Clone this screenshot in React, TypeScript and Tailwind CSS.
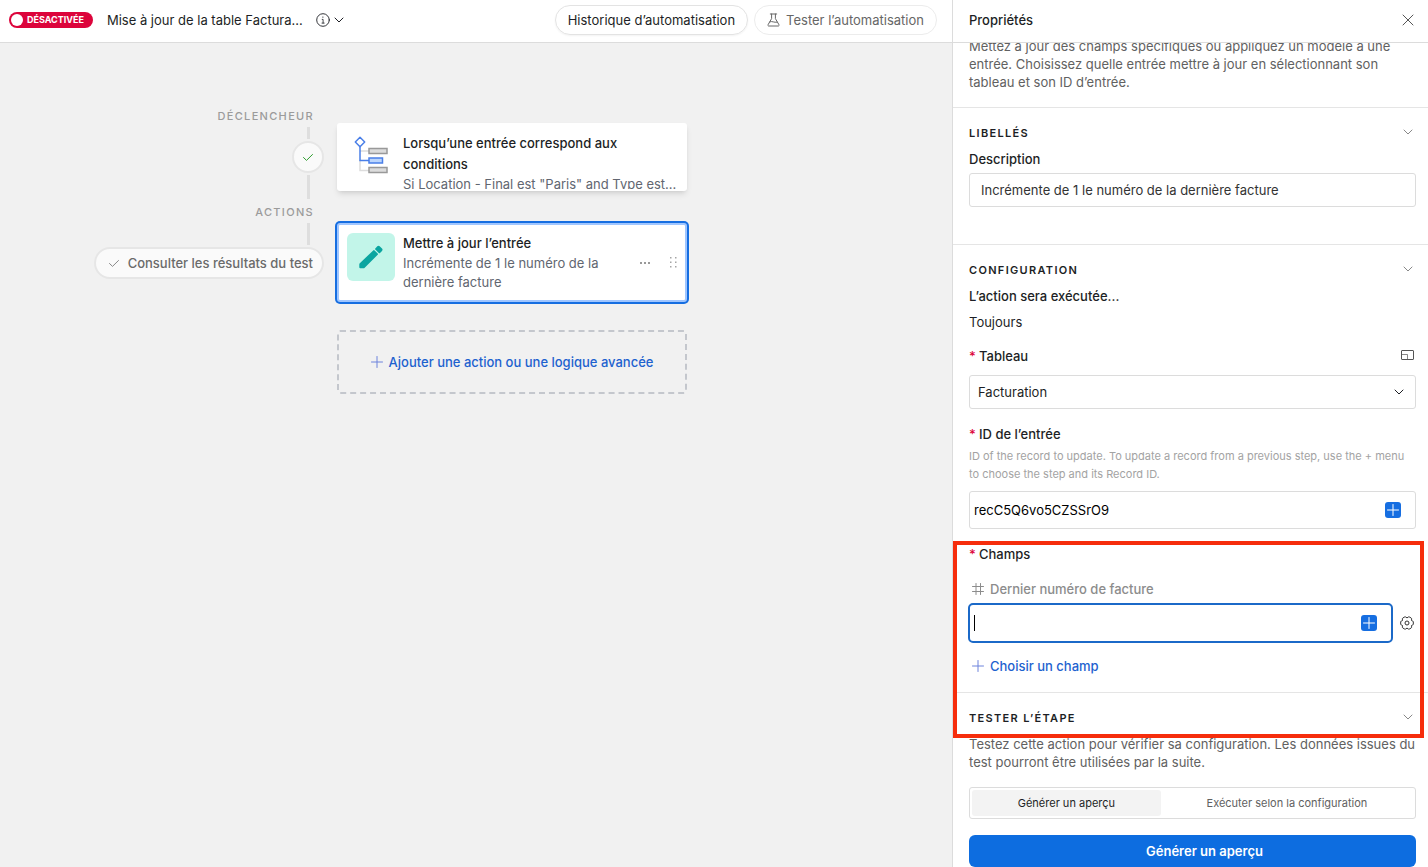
import React from "react";

type IconProps = { className?: string };

const Chevron = ({ className }: IconProps) => (
  <svg className={className} width="10" height="6" viewBox="0 0 10 6" fill="none" stroke="currentColor" strokeLinecap="round" strokeLinejoin="round">
    <path d="M1 1l4 4 4-4" />
  </svg>
);

const Check = ({ className }: IconProps) => (
  <svg className={className} width="12" height="9" viewBox="0 0 12 9" fill="none" stroke="currentColor" strokeLinecap="round" strokeLinejoin="round">
    <path d="M1.500 4.500L4.500 7.400 10.500 1.500" />
  </svg>
);

const Plus = ({ className }: IconProps) => (
  <svg className={className} width="12" height="12" viewBox="0 0 12 12" fill="none" stroke="currentColor" strokeLinecap="round">
    <path d="M6 .5v11M.5 6h11" />
  </svg>
);

const Info = () => (
  <svg width="14" height="14" viewBox="0 0 14 14" fill="none" stroke="currentColor" strokeLinecap="round">
    <circle cx="7" cy="7" r="6.3" strokeWidth=".9" />
    <path d="M6.200 6.400h.9v3.600M6 10.100h2.200" strokeWidth=".8" />
    <circle cx="6.900" cy="4.100" r=".6" fill="currentColor" stroke="none" />
  </svg>
);

const Flask = () => (
  <svg width="13" height="14" viewBox="0 0 13 14" fill="none" stroke="currentColor" strokeLinecap="round" strokeLinejoin="round">
    <path d="M3.300 1h6.400M4.600 1v4.600L1 11.800c-.3.600.1 1.200.7 1.200h9.600c.6 0 1-.6.7-1.200L8.400 5.600V1M3 8.800c2.200-1 4 1 7 .4" />
  </svg>
);

const Close = () => (
  <svg width="12" height="12" viewBox="0 0 12 12" fill="none" stroke="currentColor" strokeLinecap="round">
    <path d="M1 1l10 10M11 1L1 11" />
  </svg>
);

const ConditionIcon = () => (
  <svg width="34" height="38" viewBox="0 0 34 38" fill="none" strokeLinejoin="miter">
    <path d="M6 15h9M6 24v10.500h9" stroke="#dddddd" strokeWidth="1.500" />
    <path d="M6 11v13.500h9" stroke="#4a7fe8" strokeWidth="1.500" />
    <path d="M6 1.300L10.700 6 6 10.700 1.300 6z" fill="#fff" stroke="#4a7fe8" strokeWidth="1.500" strokeLinejoin="round" />
    <rect x="15" y="12.500" width="18" height="5" fill="#dcdcdc" stroke="#999" strokeWidth="1.500" />
    <rect x="15" y="22" width="13.500" height="5" fill="#bcd6fd" stroke="#4a7fe8" strokeWidth="1.500" />
    <rect x="15" y="31.500" width="18" height="5" fill="#dcdcdc" stroke="#999" strokeWidth="1.500" />
  </svg>
);

const Pencil = () => (
  <svg width="24" height="24" viewBox="0 0 24 24" fill="#0ba5a0">
    <path d="M.8 18.300L14.200 5.400q.7-.6 1.400 0l3.100 3.100q.6.700 0 1.300L5.700 22.700q-.5.500-1.200.5H1.300q-1 0-1-1v-2.800q0-.6.500-1.100z" />
    <path d="M16.300 3.400L18.300 1.300q1.200-1.100 2.400 0l2.300 2.300q1.100 1.200 0 2.400l-2 2q-.6.500-1.200 0l-3.500-3.400q-.6-.6 0-1.200z" />
  </svg>
);

const Expand = () => (
  <svg width="13" height="10" viewBox="0 0 13 10" fill="none" stroke="currentColor">
    <rect x=".5" y=".5" width="12" height="9" rx=".5" />
    <path d="M1 4.500h5.500v5" strokeOpacity=".7" />
  </svg>
);

const Hash = () => (
  <svg width="12" height="12" viewBox="0 0 12 12" fill="none" stroke="currentColor" strokeLinecap="round">
    <path d="M4 .5v11M8.500 .5v11M.5 3.500h11M.5 8.500h11" />
  </svg>
);

const Gear = () => (
  <svg width="14" height="14" viewBox="0 0 14 14" fill="none" stroke="currentColor" strokeLinejoin="round">
    <path d="M13.300 5.600v2.800Q13.200 8.900 12.500 9L11.500 9.500 11.600 10.900Q11.700 11.600 11.200 12L9.200 13.100Q8.600 13.300 8.200 12.900L7 12.100 5.800 12.900Q5.400 13.300 4.800 13.100L2.800 12Q2.300 11.600 2.400 10.900L2.500 9.500 1.500 9Q.8 8.900.7 8.400V5.600Q.8 5.100 1.500 5L2.500 4.500 2.400 3.100Q2.300 2.400 2.800 2L4.800.9Q5.400.700 5.800 1.100L7 1.900 8.200 1.100Q8.600.700 9.200.9L11.200 2Q11.700 2.400 11.600 3.100L11.500 4.500 12.500 5Q13.200 5.100 13.300 5.600z" />
    <circle cx="7" cy="7" r="2" />
  </svg>
);

const Drag = () => (
  <svg width="7" height="11" viewBox="0 0 7 11" fill="#a5a5a5">
    <path d="M0 0h1.500v1.500H0zM5 0h1.500v1.500H5zM0 4.500h1.500V6H0zM5 4.500h1.500V6H5zM0 9h1.500v1.500H0zM5 9h1.500v1.500H5z" />
  </svg>
);

const SectionTitle = ({ children }: { children: React.ReactNode }) => (
  <div className="flex items-center justify-between pt-4 pr-[3px]">
    <h2 className="text-[11px] leading-[18px] font-semibold tracking-[0.12em] uppercase">{children}</h2>
    <button type="button" aria-label="Replier" className="pb-[2px] text-[#888]">
      <Chevron />
    </button>
  </div>
);

const Required = () => <span className="inline-block w-[10px] font-medium text-[#dc043b]">*</span>;

const InsertButton = () => (
  <button type="button" aria-label="Insérer" className="flex size-4 items-center justify-center rounded-[3px] bg-[#166ee1] text-white">
    <Plus />
  </button>
);

const Header = () => (
  <header className="flex h-[43px] shrink-0 items-center border-b border-[#dcdcdc] bg-white pr-[15px] pb-[2px] pl-[9px]">
    <button type="button" className="flex h-4 items-center gap-1 rounded-full bg-[#dc043b] pr-[9px] pl-[2px] text-[9px] leading-4 font-bold text-white">
      <span className="size-3 rounded-full bg-white" />
      DÉSACTIVÉE
    </button>
    <h1 className="ml-[14px]">Mise à jour de la table Factura...</h1>
    <button type="button" aria-label="Informations" className="ml-[13px] flex items-center gap-1">
      <Info />
      <Chevron />
    </button>
    <div className="ml-auto flex gap-[6px]">
      <button type="button" className="h-[30px] rounded-full border border-[#e3e3e3] px-3 shadow-xs">
        Historique d’automatisation
      </button>
      <button type="button" className="flex h-[30px] items-center gap-[6px] rounded-full border border-[#ececec] px-3 text-[#666]">
        <Flask />
        Tester l’automatisation
      </button>
    </div>
  </header>
);

const Steps = () => (
  <div className="flex w-[324px] shrink-0 flex-col items-end pt-[65px] text-[#9b9b9b]">
    <div className="mr-[10px] text-[11px] leading-4 font-medium tracking-[0.12em]">DÉCLENCHEUR</div>
    <div className="mt-[3px] mr-[14px] h-3 w-[3px] bg-[#dedede]" />
    <button type="button" aria-label="Testé" className="mt-[2px] flex size-8 items-center justify-center rounded-full border-2 border-[#e6e6e6] bg-[#fafafa] text-[#2f9e2f]">
      <Check />
    </button>
    <div className="mt-[2px] mr-[14px] h-6 w-[3px] bg-[#dedede]" />
    <div className="mt-[5px] mr-[10px] text-[11px] leading-4 font-medium tracking-[0.12em]">ACTIONS</div>
    <div className="mt-[3px] mr-[14px] h-[22px] w-[3px] bg-[#dedede]" />
    <button type="button" className="mt-[2px] flex h-8 items-center gap-2 rounded-full border-2 border-[#e6e6e6] bg-[#fafafa] pr-[9px] pl-3 font-medium whitespace-nowrap text-[#6a6a6a]">
      <Check className="text-[#888]" />
      Consulter les résultats du test
    </button>
  </div>
);

const Flow = () => (
  <div className="flex w-[350px] shrink-0 flex-col pt-20">
    <div className="flex gap-2 rounded-[3px] bg-white p-[10px] pb-[2px] shadow-md">
      <div className="flex size-12 shrink-0 justify-center pt-[3px]">
        <ConditionIcon />
      </div>
      <div className="h-14 overflow-hidden">
        <div className="w-[230px] leading-[21px] font-medium">Lorsqu’une entrée correspond aux conditions</div>
        <div className="leading-[19px] whitespace-nowrap text-[#616670]">Si Location - Final est "Paris" and Type est...</div>
      </div>
    </div>
    <div className="mt-8 flex h-[79px] gap-2 rounded-[3px] border-2 border-[#a0c6ff] bg-white p-2 ring-2 ring-[#166ee1]">
      <div className="flex size-12 shrink-0 items-center justify-center rounded-md bg-[#c2f5e9]">
        <Pencil />
      </div>
      <div className="w-[210px]">
        <div className="leading-[21px] font-medium">Mettre à jour l’entrée</div>
        <div className="leading-[19px] text-[#616670]">Incrémente de 1 le numéro de la dernière facture</div>
      </div>
      <div className="ml-auto flex items-center gap-5">
        <button type="button" aria-label="Plus d’options" className="flex gap-[2px]">
          <span className="size-[2px] rounded-full bg-[#777]" />
          <span className="size-[2px] rounded-full bg-[#777]" />
          <span className="size-[2px] rounded-full bg-[#777]" />
        </button>
        <Drag />
      </div>
    </div>
    <button type="button" className="mt-7 flex h-16 items-center justify-center gap-[6px] rounded-[3px] border-2 border-dashed border-[#c4c7cd] font-medium text-[#1d62cf]">
      <Plus className="text-[#6c83dc]" />
      Ajouter une action ou une logique avancée
    </button>
  </div>
);

const Properties = () => (
  <aside className="flex w-1/3 shrink-0 flex-col border-l border-[#dcdcdc] bg-white">
    <div className="flex h-[43px] shrink-0 items-center justify-between border-b border-[#dcdcdc] pr-[14px] pb-[3px] pl-4">
      <h2 className="font-medium">Propriétés</h2>
      <button type="button" aria-label="Fermer" className="text-[#555]">
        <Close />
      </button>
    </div>
    <div className="min-h-0 flex-1 overflow-hidden">
      <div className="relative -mt-[6px]">
        <p className="pr-3 pb-4 pl-4 text-[#616161]">
          Mettez à jour des champs spécifiques ou appliquez un modèle à une entrée. Choisissez quelle entrée mettre à jour en sélectionnant son tableau et son ID d’entrée.
        </p>
        <section className="border-t border-[#e5e5e5] pr-3 pb-[37px] pl-4">
          <SectionTitle>Libellés</SectionTitle>
          <label htmlFor="description" className="mt-2 block font-medium">
            Description
          </label>
          <input id="description" defaultValue="Incrémente de 1 le numéro de la dernière facture" className="mt-[5px] block h-[34px] w-full rounded-[3px] border border-[#dcdcdc] px-[11px] text-[#333]" />
        </section>
        <section className="border-t border-[#e5e5e5] pr-3 pb-[17px] pl-4">
          <SectionTitle>Configuration</SectionTitle>
          <div className="mt-2 font-medium">L’action sera exécutée...</div>
          <div className="mt-2">Toujours</div>
          <div className="mt-4 flex items-center justify-between">
            <label htmlFor="table" className="font-medium">
              <Required />
              Tableau
            </label>
            <button type="button" aria-label="Agrandir" className="mr-[2px] pb-[2px] text-[#555]">
              <Expand />
            </button>
          </div>
          <div className="relative mt-[10px]">
            <select id="table" className="block h-[34px] w-full appearance-none rounded-[3px] border border-[#dcdcdc] px-2">
              <option>Facturation</option>
            </select>
            <Chevron className="pointer-events-none absolute top-[14px] right-3" />
          </div>
          <label htmlFor="record" className="mt-4 block font-medium">
            <Required />
            ID de l’entrée
          </label>
          <p className="mt-1 text-[11px] text-[#a3a3a3]">
            ID of the record to update. To update a record from a previous step, use the + menu to choose the step and its Record ID.
          </p>
          <div className="mt-2 flex h-[38px] items-center rounded-[3px] border border-[#dcdcdc] pr-[14px] pl-1">
            <input id="record" defaultValue="recC5Q6vo5CZSSrO9" className="min-w-0 flex-1 text-black outline-none" />
            <InsertButton />
          </div>
          <div className="mt-4 font-medium">
            <Required />
            Champs
          </div>
          <label htmlFor="lastNumber" className="mt-[17px] flex items-center gap-[6px] pl-[3px] font-medium text-[#8c8c8c]">
            <Hash />
            Dernier numéro de facture
          </label>
          <div className="mt-[5px] -ml-px flex items-center gap-[7px]">
            <div className="relative flex h-10 flex-1 items-center rounded-[5px] border-2 border-[#1b69c8] pr-[14px] pl-1">
              <input id="lastNumber" className="min-w-0 flex-1 caret-transparent outline-none" />
              <span className="absolute left-1 h-4 w-px bg-black" />
              <InsertButton />
            </div>
            <button type="button" aria-label="Paramètres du champ" className="mr-[2px] text-[#333]">
              <Gear />
            </button>
          </div>
          <button type="button" className="mt-[14px] flex items-center gap-[6px] pl-[3px] font-medium text-[#1d62cf]">
            <Plus className="text-[#6c83dc]" />
            Choisir un champ
          </button>
        </section>
        <section className="border-t border-[#e5e5e5] pr-3 pl-4">
          <SectionTitle>Tester l’étape</SectionTitle>
          <p className="mt-2 text-[#616161]">
            Testez cette action pour vérifier sa configuration. Les données issues du test pourront être utilisées par la suite.
          </p>
          <div className="mt-4 flex h-8 rounded-[3px] border border-[#dcdcdc] p-[2px] text-[11px]">
            <button type="button" className="flex-auto rounded-[3px] bg-[#f3f3f3]">
              Générer un aperçu
            </button>
            <button type="button" className="flex-auto text-[#616161]">
              Exécuter selon la configuration
            </button>
          </div>
          <button type="button" className="mt-4 h-8 w-full rounded-md bg-[#0d6de0] pl-6 font-semibold text-white">
            Générer un aperçu
          </button>
        </section>
        <div className="pointer-events-none absolute top-[504px] right-1 left-0 h-[197px] border-4 border-[#f62d0c]" />
      </div>
    </div>
  </aside>
);

const App = () => {
  return (
    <div className="flex h-screen overflow-hidden bg-[#f1f1f1] font-['Inter','Liberation_Sans',sans-serif] text-[13px] leading-[18px] text-[#1d1f25]">
      <main className="flex min-w-0 flex-1 flex-col">
        <Header />
        <div className="flex flex-1 gap-[13px] overflow-hidden">
          <Steps />
          <Flow />
        </div>
      </main>
      <Properties />
    </div>
  );
};

export default App;
